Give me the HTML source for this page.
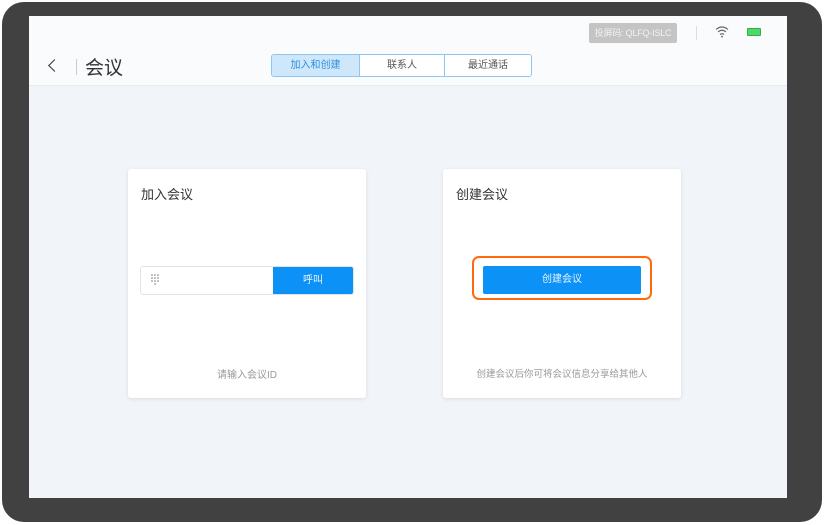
<!DOCTYPE html>
<html><head><meta charset="utf-8"><style>
*{margin:0;padding:0;box-sizing:border-box}
body{width:824px;height:525px;background:#fff;position:relative;overflow:hidden;font-family:"Liberation Sans","Noto Sans CJK SC",sans-serif}
.dev{position:absolute;left:2px;top:2px;width:820px;height:520px;background:#414141;border-radius:22px}
.scr{position:absolute;left:29px;top:16px;width:758px;height:482px;background:#f1f5f9;overflow:hidden}
.hdr{position:absolute;left:0;top:0;width:758px;height:70px;background:#fafbfc;border-bottom:1px solid #e8edf2}
.code{position:absolute;left:560px;top:7px;width:88px;height:20px;background:#c4c4c4;color:#f2f2f2;font-size:9px;line-height:20px;text-align:center;border-radius:2px;white-space:nowrap;letter-spacing:-0.2px}
.vsep{position:absolute;left:667px;top:10px;width:1px;height:14px;background:#ddd}
.bat{position:absolute;left:718px;top:12px;width:14px;height:8px;background:#4cd964;border:1px solid #3aa850;border-radius:1px}
.back{position:absolute;left:21px;top:45px;width:9px;height:9px;border-left:1.5px solid #333;border-bottom:1.5px solid #333;transform:rotate(45deg)}
.sep2{position:absolute;left:47px;top:43px;width:1px;height:16px;background:#ccc}
.title{position:absolute;left:56px;top:37px;font-size:19px;color:#333}
.tabs{position:absolute;left:242px;top:38px;height:23px;display:flex;border:1px solid #8cc6f2;border-radius:3px;overflow:hidden}
.tabs div{width:87px;font-size:10px;line-height:21px;text-align:center;color:#555;background:#fff;border-left:1px solid #8cc6f2}
.tabs div:first-child{border-left:none;background:#cfe7fa;color:#2e8fe0}
.tabs div:nth-child(2){width:85px}
.card{position:absolute;top:153px;width:238px;height:229px;background:#fff;border-radius:3px;box-shadow:0 1px 4px rgba(0,0,0,.1)}
.card h3{position:absolute;left:13px;top:15px;font-size:13px;font-weight:normal;color:#333}
.hint{position:absolute;left:0;width:100%;top:197px;text-align:center;font-size:10px;color:#999}
.inp{position:absolute;left:12px;top:97px;width:214px;height:29px;border:1px solid #e3e3e3;border-radius:3px;overflow:hidden}
.call{position:absolute;right:0;top:0;width:80px;height:100%;background:#0c91f7;color:#e8f4ff;font-size:10px;line-height:27px;text-align:center}
.btn{position:absolute;left:40px;top:97px;width:158px;height:28px;background:#0c91f7;border-radius:2px;color:#e8f4ff;font-size:10px;line-height:28px;text-align:center}
.ring{position:absolute;left:29px;top:87px;width:180px;height:44px;border:2px solid #ff6a0d;border-radius:7px}
</style></head><body>
<div class="dev"></div>
<div class="scr">
 <div class="hdr">
  <div class="code">投屏码: QLFQ-ISLC</div>
  <div class="vsep"></div>
  <svg style="position:absolute;left:686px;top:9px" width="14" height="13" viewBox="0 0 14 13"><g fill="none" stroke="#666" stroke-width="1.1"><path d="M1 4.5Q7 -0.5 13 4.5"/><path d="M3 7Q7 3.5 11 7"/><path d="M5 9.5Q7 8 9 9.5"/></g><circle cx="7" cy="11.6" r="0.9" fill="#666"/></svg>
  <div class="bat"></div>
  <div class="back"></div><div class="sep2"></div>
  <div class="title">会议</div>
  <div class="tabs"><div>加入和创建</div><div>联系人</div><div>最近通话</div></div>
 </div>
 <div class="card" style="left:99px">
  <h3>加入会议</h3>
  <div class="inp">
   <svg style="position:absolute;left:9px;top:6px" width="10" height="15" viewBox="0 0 10 15"><g fill="#777"><circle cx="2" cy="2" r=".8"/><circle cx="5" cy="2" r=".8"/><circle cx="8" cy="2" r=".8"/><circle cx="2" cy="5" r=".8"/><circle cx="5" cy="5" r=".8"/><circle cx="8" cy="5" r=".8"/><circle cx="2" cy="8" r=".8"/><circle cx="5" cy="8" r=".8"/><circle cx="8" cy="8" r=".8"/><circle cx="5" cy="11" r=".8"/></g></svg>
   <div class="call">呼叫</div>
  </div>
  <div class="hint">请输入会议ID</div>
 </div>
 <div class="card" style="left:414px">
  <h3>创建会议</h3>
  <div class="ring"></div>
  <div class="btn">创建会议</div>
  <div class="hint" style="font-size:9.5px">创建会议后你可将会议信息分享给其他人</div>
 </div>
</div>
</body></html>
